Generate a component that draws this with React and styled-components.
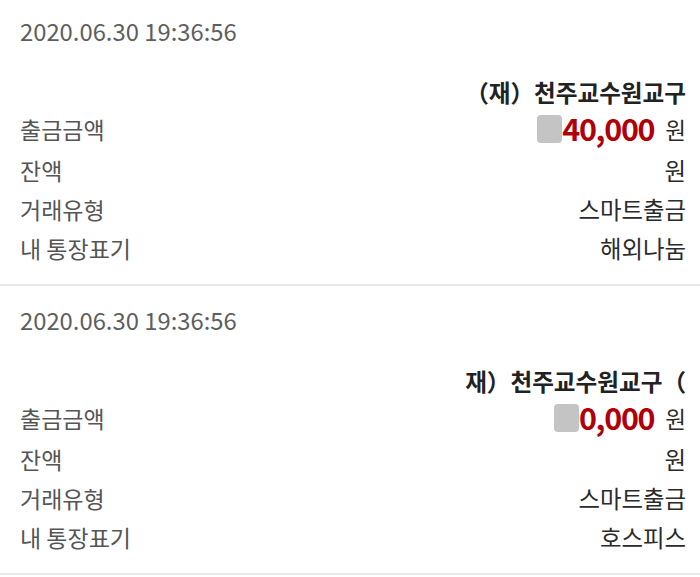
import React from "react";
import styled, { createGlobalStyle } from "styled-components";

const GlobalStyle = createGlobalStyle`
  html, body {
    margin: 0;
    padding: 0;
    background: #ffffff;
  }
  body {
    font-family: "Noto Sans CJK KR", "Noto Sans", sans-serif;
    overflow: hidden;
  }
`;

const Page = styled.div`
  width: 700px;
  margin-top: -3px;
  display: flex;
  flex-direction: column;
`;

const Card = styled.section`
  display: flex;
  flex-direction: column;
  padding: 19px 14px 17px 20px;
  border-bottom: 2px solid #e8e8e8;
`;

const DateLine = styled.div`
  height: 30px;
  line-height: 30px;
  font-size: 23.8px;
  color: #5e5e5e;
  margin-bottom: 31px;
`;

const Title = styled.div`
  height: 30px;
  line-height: 30px;
  text-align: right;
  font-size: 23.6px;
  font-weight: 700;
  color: #222222;
  white-space: nowrap;
`;

const Row = styled.div`
  display: flex;
  align-items: center;
  justify-content: space-between;
  height: ${(p) => (p.$tall ? 43 : 39)}px;
`;

const Label = styled.span`
  font-size: 23px;
  color: #555555;
`;

const Value = styled.span`
  font-size: 23.4px;
  color: #2b2b2b;
  display: flex;
  align-items: center;
`;

const Masked = styled.span`
  display: inline-block;
  width: 25px;
  height: 28px;
  border-radius: 4px;
  background: #c4c4c4;
`;

const Amount = styled.span`
  font-size: 30.5px;
  font-weight: 700;
  color: #b0000a;
  letter-spacing: -1.3px;
  line-height: 1;
`;

const Unit = styled.span`
  font-size: 22.5px;
  color: #2b2b2b;
  margin-left: 11px;
`;

const items = [
  {
    date: "2020.06.30 19:36:56",
    title: "（재）천주교수원교구",
    amount: "40,000",
    type: "스마트출금",
    memo: "해외나눔",
  },
  {
    date: "2020.06.30 19:36:56",
    title: "재）천주교수원교구（",
    amount: "0,000",
    type: "스마트출금",
    memo: "호스피스",
  },
];

function Transaction({ item }) {
  return (
    <Card>
      <DateLine>{item.date}</DateLine>
      <Title>{item.title}</Title>
      <Row $tall>
        <Label>출금금액</Label>
        <Value>
          <Masked />
          <Amount>{item.amount}</Amount>
          <Unit>원</Unit>
        </Value>
      </Row>
      <Row>
        <Label>잔액</Label>
        <Value>원</Value>
      </Row>
      <Row>
        <Label>거래유형</Label>
        <Value>{item.type}</Value>
      </Row>
      <Row>
        <Label>내 통장표기</Label>
        <Value>{item.memo}</Value>
      </Row>
    </Card>
  );
}

export default function App() {
  return (
    <>
      <GlobalStyle />
      <Page>
        {items.map((item, i) => (
          <Transaction key={i} item={item} />
        ))}
      </Page>
    </>
  );
}
